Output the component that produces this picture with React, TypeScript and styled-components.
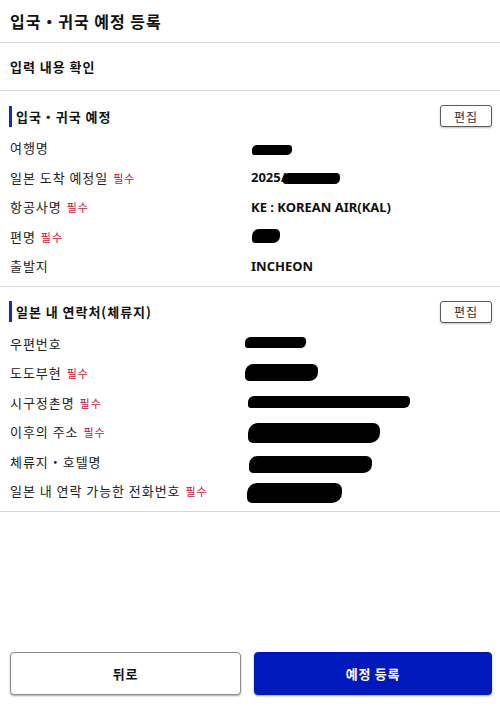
import styled, { createGlobalStyle } from "styled-components";

const GlobalStyle = createGlobalStyle`
  html, body {
    margin: 0;
    padding: 0;
    background: #fff;
  }
  body {
    font-family: "Noto Sans CJK KR", "Noto Sans", sans-serif;
    color: #1a1a1a;
    letter-spacing: 0.06em;
  }
`;

const Page = styled.div`
  display: flex;
  flex-direction: column;
  min-height: 708px;
  width: 500px;
`;

const Header = styled.header`
  height: 42px;
  display: flex;
  align-items: center;
  padding: 0 10px;
  border-bottom: 1px solid #d8d8d8;
  font-size: 16px;
  font-weight: 700;
  color: #111;
`;

const SubHeader = styled.div`
  height: 47px;
  display: flex;
  align-items: center;
  padding: 0 10px;
  border-bottom: 1px solid #d8d8d8;
  font-size: 13px;
  font-weight: 700;
  color: #111;
`;

const Section = styled.section`
  padding: 14px 8px 5px 10px;
  border-bottom: 1px solid #d8d8d8;
`;

const SectionHead = styled.div`
  display: flex;
  align-items: center;
  justify-content: space-between;
  height: 22px;
  margin-bottom: 6px;
`;

const SectionTitle = styled.h3`
  margin: 0;
  display: flex;
  align-items: center;
  gap: 4px;
  font-size: 13px;
  font-weight: 700;
  color: #111;
  &::before {
    content: "";
    display: block;
    width: 3px;
    height: 21px;
    margin-left: -1px;
    background: #1428c8;
  }
`;

const EditButton = styled.button`
  width: 52px;
  height: 22px;
  padding: 0;
  font-family: inherit;
  font-size: 12px;
  letter-spacing: 0.08em;
  color: #333;
  background: #fff;
  border: 1px solid #5a5a5a;
  border-radius: 3px;
  box-shadow: 0 1px 2px rgba(0, 0, 0, 0.25);
`;

const Row = styled.div`
  display: grid;
  grid-template-columns: 241px 1fr;
  align-items: center;
  height: 29.5px;
  font-size: 13px;
`;

const Label = styled.span`
  color: #222;
`;

const Required = styled.span`
  margin-left: 5px;
  font-size: 11px;
  color: #c8102e;
`;

const Value = styled.span`
  display: flex;
  align-items: center;
  font-family: "Noto Sans", "Noto Sans CJK KR", sans-serif;
  font-weight: 700;
  letter-spacing: 0;
  color: #111;
`;

const Redact = styled.span<{ $w: number; $h: number; $x?: number; $y?: number }>`
  display: inline-block;
  width: ${(p) => p.$w}px;
  height: ${(p) => p.$h}px;
  margin-left: ${(p) => p.$x ?? 0}px;
  transform: translateY(${(p) => p.$y ?? 0}px);
  background: #000;
  border-radius: ${(p) => p.$h / 2}px ${(p) => p.$h / 3}px ${(p) => p.$h / 2}px ${(p) => p.$h / 4}px;
`;

const Footer = styled.footer`
  margin-top: auto;
  display: grid;
  grid-template-columns: 231px 1fr;
  gap: 13px;
  padding: 0 8px 13px 10px;
`;

const BaseButton = styled.button<{ $primary?: boolean }>`
  height: 43px;
  font-family: inherit;
  font-size: 13px;
  font-weight: 700;
  letter-spacing: 0.06em;
  border-radius: 4px;
  color: ${(p) => (p.$primary ? "#fff" : "#111")};
  background: ${(p) => (p.$primary ? "#0019bd" : "#fff")};
  border: 1px solid ${(p) => (p.$primary ? "#0019bd" : "#8c8c8c")};
  box-shadow: 0 1px 2px rgba(0, 0, 0, 0.35);
`;

interface Item {
  label: string;
  required?: boolean;
  value: React.ReactNode;
}

const trip: Item[] = [
  { label: "여행명", value: <Redact $w={40} $h={10} $x={1} $y={2} /> },
  {
    label: "일본 도착 예정일",
    required: true,
    value: (
      <>
        2025/
        <Redact $w={57} $h={11} $x={-3} $y={1} />
      </>
    ),
  },
  { label: "항공사명", required: true, value: "KE : KOREAN AIR(KAL)" },
  { label: "편명", required: true, value: <Redact $w={28} $h={14} $x={1} $y={0} /> },
  { label: "출발지", value: "INCHEON" },
];

const stay: Item[] = [
  { label: "우편번호", value: <Redact $w={61} $h={11} $x={-6} $y={-1} /> },
  { label: "도도부현", required: true, value: <Redact $w={73} $h={17} $x={-6} $y={0} /> },
  { label: "시구정촌명", required: true, value: <Redact $w={162} $h={12} $x={-3} $y={0} /> },
  { label: "이후의 주소", required: true, value: <Redact $w={132} $h={20} $x={-3} $y={1} /> },
  { label: "체류지・호텔명", value: <Redact $w={123} $h={17} $x={-2} $y={3} /> },
  {
    label: "일본 내 연락 가능한 전화번호",
    required: true,
    value: <Redact $w={95} $h={20} $x={-4} $y={2} />,
  },
];

const InfoSection = ({ title, items }: { title: string; items: Item[] }) => (
  <Section>
    <SectionHead>
      <SectionTitle>{title}</SectionTitle>
      <EditButton>편집</EditButton>
    </SectionHead>
    {items.map((it) => (
      <Row key={it.label}>
        <Label>
          {it.label}
          {it.required && <Required>필수</Required>}
        </Label>
        <Value>{it.value}</Value>
      </Row>
    ))}
  </Section>
);

const App = () => {
  return (
    <Page>
      <GlobalStyle />
      <Header>입국・귀국 예정 등록</Header>
      <SubHeader>입력 내용 확인</SubHeader>
      <InfoSection title="입국・귀국 예정" items={trip} />
      <InfoSection title="일본 내 연락처(체류지)" items={stay} />
      <Footer>
        <BaseButton>뒤로</BaseButton>
        <BaseButton $primary>예정 등록</BaseButton>
      </Footer>
    </Page>
  );
};

export default App;
